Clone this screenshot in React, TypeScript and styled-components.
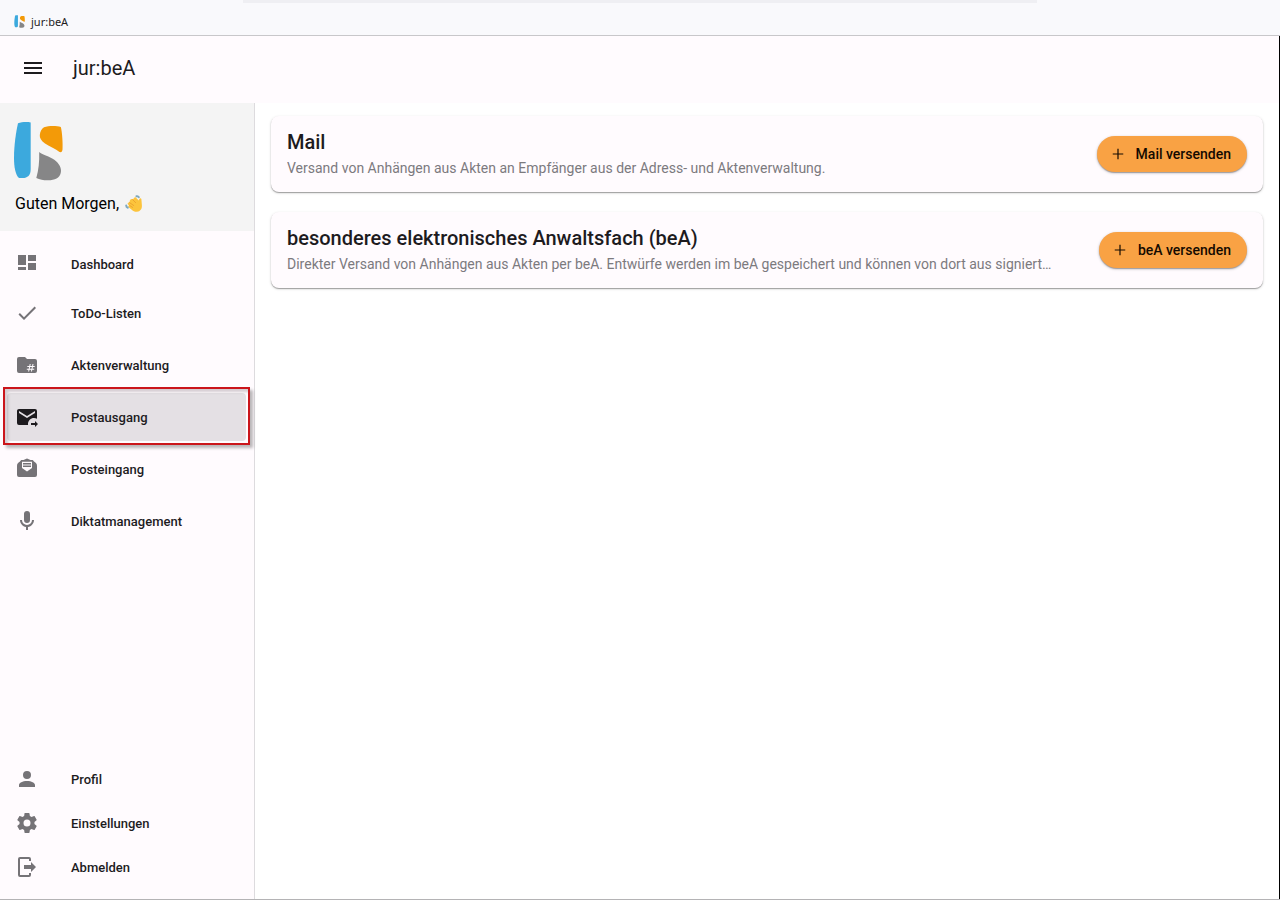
import React from 'react';
import styled, { createGlobalStyle } from 'styled-components';

const GlobalStyle = createGlobalStyle`
  *, *::before, *::after { box-sizing: border-box; }
  body {
    margin: 0;
    background: #ffffff;
    color: #1d1b1e;
    font-family: Roboto, "Liberation Sans", sans-serif;
  }
  h1, h2, p, ul { margin: 0; padding: 0; }
`;

const Window = styled.div`
  display: flex;
  flex-direction: column;
  min-height: 100vh;
  border-bottom: 1px solid #b4b3b5;
`;

const TitleBar = styled.div`
  position: relative;
  display: flex;
  align-items: center;
  gap: 6px;
  height: 36px;
  padding: 8px 14px 0;
  background: #f9f9fc;
  border-bottom: 1px solid #c8c7ca;
  font-family: "Noto Sans", "Open Sans", sans-serif;
  font-size: 11px;
  line-height: 16px;
`;

const TabShade = styled.div`
  position: absolute;
  top: 0;
  left: 19%;
  right: 19%;
  height: 3px;
  background: #efeff3;
`;

const Page = styled.div`
  flex: 1;
  display: flex;
  flex-direction: column;
  border-right: 1px solid #000000;
`;

const AppBar = styled.header`
  display: flex;
  align-items: center;
  gap: 28px;
  height: 67px;
  padding: 0 21px 4px;
  background: #fffbfe;
`;

const MenuButton = styled.button`
  display: flex;
  padding: 0;
  border: 0;
  background: none;
  color: #1d1b1e;
  cursor: pointer;
`;

const AppTitle = styled.h1`
  font-size: 20px;
  font-weight: 400;
  line-height: 28px;
`;

const Body = styled.div`
  flex: 1;
  display: flex;
`;

const Sidebar = styled.aside`
  flex: none;
  display: flex;
  flex-direction: column;
  width: 255px;
  background: #fffbfe;
  border-right: 1px solid #dddbde;
`;

const Greeting = styled.div`
  display: flex;
  flex-direction: column;
  gap: 13px;
  height: 128px;
  padding: 18px 13px 0;
  background: #f4f4f4;
`;

const GreetingText = styled.p`
  display: flex;
  align-items: center;
  gap: 6px;
  padding-left: 2px;
  color: #000000;
  font-size: 16px;
  line-height: 20px;
`;

const Nav = styled.nav`
  flex: 1;
  display: flex;
  flex-direction: column;
  justify-content: space-between;
  padding: 9px 8px 10px 7px;
`;

const NavList = styled.ul<{ $gap: number }>`
  display: flex;
  flex-direction: column;
  gap: ${(p) => p.$gap}px;
  list-style: none;
`;

const NavItem = styled.li`
  position: relative;
`;

const NavLink = styled.a<{ $active?: boolean; $compact?: boolean }>`
  display: flex;
  align-items: center;
  gap: 32px;
  height: ${(p) => (p.$compact ? 44 : 48)}px;
  padding: 0 8px;
  border-radius: 4px;
  background: ${(p) => (p.$active ? '#e4e0e4' : 'transparent')};
  color: #1d1b1e;
  font-size: 13px;
  font-weight: 500;
  line-height: 20px;
  text-decoration: none;

  svg {
    color: ${(p) => (p.$active ? '#1d1b1e' : '#757377')};
  }
`;

const NavLabel = styled.span`
  padding-top: 2px;
`;

const Highlight = styled.span`
  position: absolute;
  inset: -6px -4px -4px -4px;
  border: 2px solid #cb151b;
  box-shadow: 3px 3px 3px rgba(0, 0, 0, 0.28), inset 3px 3px 3px rgba(60, 40, 50, 0.22);
  pointer-events: none;
`;

const Main = styled.main`
  flex: 1;
  min-width: 0;
  display: flex;
  flex-direction: column;
  gap: 20px;
  padding: 13px 16px;
  background: #ffffff;
`;

const Card = styled.section`
  display: flex;
  align-items: center;
  gap: 16px;
  height: 76px;
  padding: 0 16px;
  border-radius: 8px;
  background: #fffbfe;
  box-shadow: 0 1px 1px rgba(0, 0, 0, 0.3), 0 1px 3px rgba(0, 0, 0, 0.16);
`;

const CardText = styled.div`
  flex: 1;
  min-width: 0;
`;

const CardTitle = styled.h2`
  font-size: 20px;
  font-weight: 500;
  line-height: 28px;
`;

const CardDescription = styled.p`
  overflow: hidden;
  color: #7c7a7e;
  font-size: 14px;
  line-height: 24px;
  text-overflow: ellipsis;
  white-space: nowrap;
`;

const ActionButton = styled.button`
  flex: none;
  display: flex;
  align-items: center;
  gap: 9px;
  height: 36px;
  padding: 0 16px 0 12px;
  border: 0;
  border-radius: 18px;
  background: #f9a244;
  box-shadow: 0 1px 1px rgba(0, 0, 0, 0.25), 0 1px 3px rgba(0, 0, 0, 0.25);
  color: #140a00;
  font: 500 14px/20px Roboto, "Liberation Sans", sans-serif;
  cursor: pointer;
`;

function Icon({ d, size = 24 }: { d: string; size?: number }) {
  return (
    <svg width={size} height={size} viewBox="0 0 24 24" fill="currentColor" fillRule="evenodd" aria-hidden="true">
      <path d={d} />
    </svg>
  );
}

function Logo({ width, height }: { width: number; height: number }) {
  return (
    <svg width={width} height={height} viewBox="0 0 50 60" aria-hidden="true">
      <path fill="#3ca9dd" d="M5 2.200C9 .8 14.500 .8 17.700 1.500V48c0 6.500-3.200 9-8 9H6C2.500 54 1 46 1 37 1 24 3 11 5 2.200Z" />
      <path fill="#f39a08" d="M31 6.200C36 4.500 44 4.700 47.800 6c1.400 4.500 2.200 17 1.700 22.500-.2 2-1 3-3 2.500-4-3.500-9.500-5-14.500-8.500-3.800-2.700-5.500-5.500-5.200-8.500.3-3.500 2-6.500 4.200-7.800Z" />
      <path fill="#868687" d="M26.200 31c2 2.200 8 3.500 13 6.500 6 3.500 9 8 8.800 12.500-.3 5.500-4 8.500-10.500 9.200-5 .5-10-.2-14.200-2.200 2.300-8 3.200-16 2.900-26Z" />
    </svg>
  );
}

function WavingHand() {
  return (
    <svg width="18" height="18" viewBox="0 0 18 18" role="img" aria-label="Winkende Hand">
      <path fill="#fcc43c" d="M5.500 4.600c.6-.9 1.500-.9 2.300-.2L9.500 2.600c.8-.6 1.700-.2 2 .6l2.300 2.200.6-1.600c.6-1 1.900-.7 2 .4l.5 6.300c.2 3.600-1.700 6-4.900 6.200-2.200.1-3.800-.5-5-1.800l-3.400-2.600c-.8-.9-.2-1.900.7-1.800L3 9.400c-.7-.9-.1-1.800.8-1.800l.9-.2c-.2-1 .1-2 .8-2.800Z" />
      <path fill="none" stroke="#eda52e" strokeWidth="1" strokeLinecap="round" d="m4.700 10.500 2.900 1.900M4.500 7.600l4.200 2.900M7.600 4.600l3 3" />
      <path fill="none" stroke="#7fa9bf" strokeWidth="2" strokeLinecap="round" d="M11.500 1.200c1.100-.2 1.900.1 2.300.9M1.200 10.600c0 1 .6 1.800 1.600 2.100" />
    </svg>
  );
}

const icons = {
  menu: 'M3 6h18v2H3V6m0 5h18v2H3v-2m0 5h18v2H3v-2Z',
  dashboard: 'M13 3v6h8V3M13 18h8v-7h-8M3 18h8v-3H3M3 13h8V3H3',
  check: 'M21 7 9 19l-5.500-5.500 1.410-1.410L9 16.170 19.590 5.590 21 7Z',
  folder:
    'M20 6h-8l-2-2H4a2 2 0 0 0-2 2v12a2 2 0 0 0 2 2h16a2 2 0 0 0 2-2V8a2 2 0 0 0-2-2ZM13.100 18.500l.4-1.800h-1.700v-1h1.900l.4-1.700h-1.800v-1h2l.4-2h1l-.4 2h1.800l.4-2h1l-.4 2h1.600v1h-1.800l-.4 1.700h1.700v1h-1.900l-.4 1.800h-1l.4-1.800h-1.800l-.4 1.800h-1Zm1.600-2.800h1.800l.4-1.700h-1.800l-.4 1.700Z',
  outbox:
    'M13 19c0-3.310 2.690-6 6-6 1.100 0 2.120.3 3 .81V6a2 2 0 0 0-2-2H4c-1.110 0-2 .89-2 2v12a2 2 0 0 0 2 2h9.090c-.05-.33-.09-.66-.09-1M4 8V6l8 5 8-5v2l-8 5-8-5m16 14v-2h-4v-2h4v-2l3 3-3 3Z',
  inbox:
    'M12 1.500 15.500 3H17c1 0 1.600.6 2 1.500 2.200 1.200 3 2.500 3 4.500v9a2 2 0 0 1-2 2H4a2 2 0 0 1-2-2V9c0-2 .8-3.300 3-4.500C5.400 3.600 6 3 7 3h1.500L12 1.500ZM7 4.800V11l5 3.500 5-3.500V4.800H7Zm1 1.200h8v1.500H8V6Zm0 2.500h8V10H8V8.500Z',
  microphone:
    'M12 2a3 3 0 0 1 3 3v6a3 3 0 0 1-6 0V5a3 3 0 0 1 3-3m7 9c0 3.530-2.610 6.440-6 6.930V21h-2v-3.070c-3.390-.49-6-3.400-6-6.930h2a5 5 0 0 0 10 0h2Z',
  account: 'M12 4a4 4 0 1 1 0 8 4 4 0 0 1 0-8m0 10c4.420 0 8 1.790 8 4v2H4v-2c0-2.210 3.580-4 8-4Z',
  cog: 'M12 15.500A3.500 3.500 0 0 1 8.500 12 3.500 3.500 0 0 1 12 8.500a3.500 3.500 0 0 1 3.500 3.500 3.500 3.500 0 0 1-3.500 3.500m7.430-2.530c.04-.32.07-.64.07-.97s-.03-.66-.07-1l2.110-1.630c.19-.15.24-.42.12-.64l-2-3.460c-.12-.22-.39-.31-.61-.22l-2.490 1c-.52-.39-1.060-.73-1.690-.98l-.37-2.650A.506.506 0 0 0 14 2h-4c-.25 0-.46.18-.5.42l-.37 2.650c-.63.25-1.170.59-1.690.98l-2.490-1c-.22-.09-.49 0-.61.22l-2 3.460c-.13.22-.07.49.12.64L4.570 11c-.04.34-.07.67-.07 1s.03.65.07.97l-2.110 1.660c-.19.15-.25.42-.12.64l2 3.460c.12.22.39.3.61.22l2.490-1.010c.52.4 1.060.74 1.690.99l.37 2.650c.04.24.25.42.5.42h4c.25 0 .46-.18.5-.42l.37-2.650c.63-.26 1.170-.59 1.690-.99l2.490 1.010c.22.08.49 0 .61-.22l2-3.460c.12-.22.07-.49-.12-.64l-2.110-1.660Z',
  logout:
    'M16 17v-3H9v-4h7V7l5 5-5 5M14 2a2 2 0 0 1 2 2v2h-2V4H5v16h9v-2h2v2a2 2 0 0 1-2 2H5a2 2 0 0 1-2-2V4a2 2 0 0 1 2-2h9Z',
  plus: 'M19 12.800h-6.200V19h-1.600v-6.200H5v-1.600h6.200V5h1.600v6.200H19v1.600Z',
};

const firstEntry = { label: 'Dashboard', icon: icons.dashboard };

const entries = [
  { label: 'ToDo-Listen', icon: icons.check },
  { label: 'Aktenverwaltung', icon: icons.folder },
  { label: 'Postausgang', icon: icons.outbox, active: true },
  { label: 'Posteingang', icon: icons.inbox },
  { label: 'Diktatmanagement', icon: icons.microphone },
];

const accountEntries = [
  { label: 'Profil', icon: icons.account },
  { label: 'Einstellungen', icon: icons.cog },
  { label: 'Abmelden', icon: icons.logout },
];

const cards = [
  {
    title: 'Mail',
    description: 'Versand von Anhängen aus Akten an Empfänger aus der Adress- und Aktenverwaltung.',
    action: 'Mail versenden',
  },
  {
    title: 'besonderes elektronisches Anwaltsfach (beA)',
    description:
      'Direkter Versand von Anhängen aus Akten per beA. Entwürfe werden im beA gespeichert und können von dort aus signiert…',
    action: 'beA versenden',
  },
];

export default function App() {
  return (
    <>
      <GlobalStyle />
      <Window>
        <TitleBar>
          <TabShade />
          <Logo width={11} height={13} />
          <span>jur:beA</span>
        </TitleBar>
        <Page>
          <AppBar>
            <MenuButton type="button" aria-label="Menü">
              <Icon d={icons.menu} />
            </MenuButton>
            <AppTitle>jur:beA</AppTitle>
          </AppBar>
          <Body>
            <Sidebar>
              <Greeting>
                <Logo width={50} height={60} />
                <GreetingText>
                  Guten Morgen, <WavingHand />
                </GreetingText>
              </Greeting>
              <Nav>
                <NavList $gap={1}>
                  <NavItem>
                    <NavLink href="#">
                      <Icon d={firstEntry.icon} />
                      <NavLabel>{firstEntry.label}</NavLabel>
                    </NavLink>
                  </NavItem>
                  <NavItem>
                    <NavList $gap={4}>
                      {entries.map((entry) => (
                        <NavItem key={entry.label}>
                          <NavLink href="#" $active={entry.active} aria-current={entry.active ? 'page' : undefined}>
                            <Icon d={entry.icon} />
                            <NavLabel>{entry.label}</NavLabel>
                          </NavLink>
                          {entry.active && <Highlight />}
                        </NavItem>
                      ))}
                    </NavList>
                  </NavItem>
                </NavList>
                <NavList $gap={0}>
                  {accountEntries.map((entry) => (
                    <NavItem key={entry.label}>
                      <NavLink href="#" $compact>
                        <Icon d={entry.icon} />
                        <NavLabel>{entry.label}</NavLabel>
                      </NavLink>
                    </NavItem>
                  ))}
                </NavList>
              </Nav>
            </Sidebar>
            <Main>
              {cards.map((card) => (
                <Card key={card.title}>
                  <CardText>
                    <CardTitle>{card.title}</CardTitle>
                    <CardDescription>{card.description}</CardDescription>
                  </CardText>
                  <ActionButton type="button">
                    <Icon d={icons.plus} size={18} />
                    {card.action}
                  </ActionButton>
                </Card>
              ))}
            </Main>
          </Body>
        </Page>
      </Window>
    </>
  );
}
